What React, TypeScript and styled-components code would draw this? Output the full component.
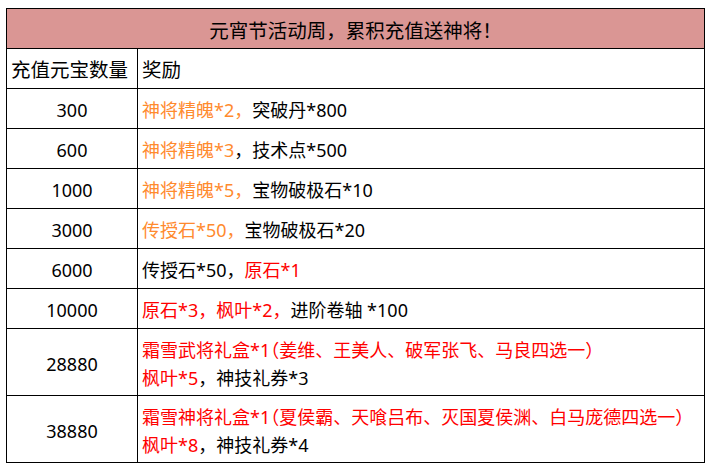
import React from "react";
import styled, { createGlobalStyle } from "styled-components";

const Global = createGlobalStyle`
  html, body { margin: 0; padding: 0; background: #fff; }
  body { padding: 8px 0 0 6px; }
`;

const Table = styled.table`
  border-collapse: collapse;
  width: 699px;
  table-layout: fixed;
  font-family: "Noto Sans", "Noto Sans CJK SC", sans-serif;
  font-size: 18px;
  color: #000;
`;

const Cell = styled.td<{ $center?: boolean; $h?: number; $big?: boolean }>`
  border: 1px solid #000;
  height: ${(p) => p.$h ?? 40}px;
  padding: 3px 4px 0 4px;
  box-sizing: border-box;
  text-align: ${(p) => (p.$center ? "center" : "left")};
  vertical-align: middle;
  line-height: 28px;
  white-space: nowrap;
  overflow: hidden;
  font-size: ${(p) => (p.$big ? "19.5px" : "18px")};
`;

const TitleCell = styled(Cell)`
  background: #da9694;
  text-align: center;
  padding-top: 4px;
`;

const Orange = styled.span`
  color: #ff8a2e;
`;

const Red = styled.span`
  color: #ff0000;
`;

const Paren = styled.span`
  font-feature-settings: "halt";
`;

const Line = styled.div``;

type Row = { amount: string; reward: React.ReactNode; h?: number };

const rows: Row[] = [
  { amount: "300", reward: (<><Orange>神将精魄*2，</Orange>突破丹*800</>) },
  { amount: "600", reward: (<><Orange>神将精魄*3</Orange>，技术点*500</>) },
  { amount: "1000", reward: (<><Orange>神将精魄*5，</Orange>宝物破极石*10</>) },
  { amount: "3000", reward: (<><Orange>传授石*50，</Orange>宝物破极石*20</>) },
  { amount: "6000", reward: (<>传授石*50，<Red>原石*1</Red></>) },
  { amount: "10000", reward: (<><Red>原石*3，枫叶*2，</Red>进阶卷轴 *100</>) },
  {
    amount: "28880",
    h: 67,
    reward: (
      <>
        <Line>
          <Red>
            霜雪武将礼盒*1<Paren>（</Paren>姜维、王美人、破军张飞、马良四选一<Paren>）</Paren>
          </Red>
        </Line>
        <Line><Red>枫叶*5</Red>，神技礼券*3</Line>
      </>
    ),
  },
  {
    amount: "38880",
    h: 67,
    reward: (
      <>
        <Line>
          <Red>
            霜雪神将礼盒*1<Paren>（</Paren>夏侯霸、天喰吕布、灭国夏侯渊、白马庞德四选一<Paren>）</Paren>
          </Red>
        </Line>
        <Line><Red>枫叶*8</Red>，神技礼券*4</Line>
      </>
    ),
  },
];

export default function App() {
  return (
    <>
      <Global />
      <Table>
        <colgroup>
          <col style={{ width: 131 }} />
          <col />
        </colgroup>
        <tbody>
          <tr>
            <TitleCell colSpan={2} $big>元宵节活动周，累积充值送神将！</TitleCell>
          </tr>
          <tr>
            <Cell $big>充值元宝数量</Cell>
            <Cell $big>奖励</Cell>
          </tr>
          {rows.map((r) => (
            <tr key={r.amount}>
              <Cell $center $h={r.h}>{r.amount}</Cell>
              <Cell $h={r.h}>{r.reward}</Cell>
            </tr>
          ))}
        </tbody>
      </Table>
    </>
  );
}
